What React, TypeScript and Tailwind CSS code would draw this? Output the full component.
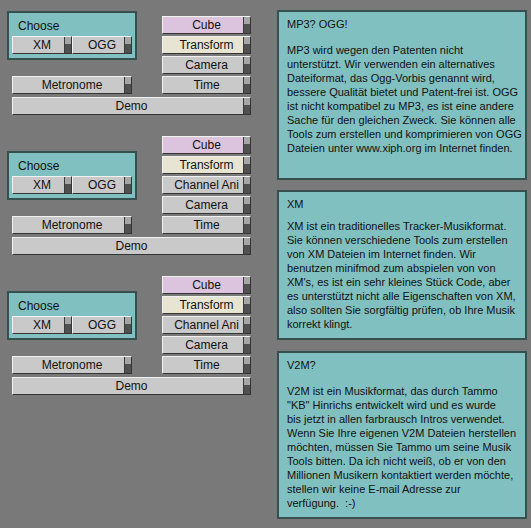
import type { ReactNode } from "react"

type Tone = "gray" | "pink" | "cream"

const tones: Record<Tone, string> = {
  gray: "bg-[#c9c9c9]",
  pink: "bg-[#dcc4de]",
  cream: "bg-[#e7e5d1]",
}

// Old-style menu button with the little indicator strip on the right
function Btn({ label, tone = "gray", className = "" }: { label: string; tone?: Tone; className?: string }) {
  return (
    <div
      className={`flex h-[18px] border border-t-[#f2f2f2] border-l-[#f2f2f2] border-b-[#343434] border-r-[#343434] ${tones[tone]} ${className}`}
    >
      <span className="flex-1 pl-[7px] text-center text-[12px] leading-[16px] text-[#111]">{label}</span>
      <span className="flex w-[7px] flex-col border-l border-[#3a3a3a]">
        <span className="h-[7px] bg-[#a6a6a6]" />
        <span className="flex-1 bg-[#505050]" />
      </span>
    </div>
  )
}

function ToolGroup({ withChannel, className = "" }: { withChannel?: boolean; className?: string }) {
  return (
    <div className={`flex flex-col ${className}`}>
      <div className="flex items-end gap-[25px]">
        <div className="flex w-[130px] flex-col">
          <div className="h-[49px] border-2 border-[#36504f] bg-[#81c0c0] px-[3px] pt-[6px]">
            <div className="pl-[6px] text-[12px] leading-[14px] text-[#111]">Choose</div>
            <div className="mt-[3px] flex">
              <Btn label="XM" className="w-[60px]" />
              <Btn label="OGG" className="w-[60px]" />
            </div>
          </div>
          <Btn label="Metronome" className="ml-[5px] mt-[16px] w-[120px]" />
        </div>
        <div className="flex w-[89px] flex-col gap-[2px]">
          <Btn label="Cube" tone="pink" />
          <Btn label="Transform" tone="cream" />
          {withChannel && <Btn label="Channel Ani" />}
          <Btn label="Camera" />
          <Btn label="Time" />
        </div>
      </div>
      <Btn label="Demo" className="ml-[5px] mt-[3px] w-[239px]" />
    </div>
  )
}

function InfoPanel({ title, gap, lines, className = "" }: { title: string; gap: string; lines: ReactNode[]; className?: string }) {
  return (
    <div className={`border-2 border-[#36504f] bg-[#81c0c0] pl-[8px] pt-[5px] text-[11px] leading-[14px] text-[#111] ${className}`}>
      <div className={gap}>{title}</div>
      {lines.map((l, i) => (
        <div key={i} className="whitespace-pre">
          {l}
        </div>
      ))}
    </div>
  )
}

export default function App() {
  return (
    <div
      className="flex h-[528px] w-[531px] bg-[#797979]"
      style={{ fontFamily: '"Liberation Sans", Arial, sans-serif' }}
    >
      <div className="w-[270px] pl-[7px] pt-[11px]">
        <ToolGroup />
        <ToolGroup withChannel className="mt-[21px]" />
        <ToolGroup withChannel className="mt-[21px]" />
      </div>

      <div className="ml-[7px] flex w-[250px] flex-col pt-[10px]">
        <InfoPanel
          className="h-[170px]"
          title="MP3? OGG!"
          gap="mb-[12px]"
          lines={[
            "MP3 wird wegen den Patenten nicht",
            "unterstützt. Wir verwenden ein alternatives",
            "Dateiformat, das Ogg-Vorbis genannt wird,",
            "bessere Qualität bietet und Patent-frei ist. OGG",
            "ist nicht kompatibel zu MP3, es ist eine andere",
            "Sache für den gleichen Zweck. Sie können alle",
            "Tools zum erstellen und komprimieren von OGG",
            "Dateien unter www.xiph.org im Internet finden.",
          ]}
        />
        <InfoPanel
          className="mt-[10px] h-[150px]"
          title="XM"
          gap="mb-[8px]"
          lines={[
            "XM ist ein traditionelles Tracker-Musikformat.",
            "Sie können verschiedene Tools zum erstellen",
            "von XM Dateien im Internet finden. Wir",
            "benutzen minifmod zum abspielen von von",
            "XM's, es ist ein sehr kleines Stück Code, aber",
            "es unterstützt nicht alle Eigenschaften von XM,",
            "also sollten Sie sorgfältig prüfen, ob Ihre Musik",
            "korrekt klingt.",
          ]}
        />
        <InfoPanel
          className="mt-[11px] h-[168px]"
          title="V2M?"
          gap="mb-[12px]"
          lines={[
            "V2M ist ein Musikformat, das durch Tammo",
            "\"KB\" Hinrichs entwickelt wird und es wurde",
            "bis jetzt in allen farbrausch Intros verwendet.",
            "Wenn Sie Ihre eigenen V2M Dateien herstellen",
            "möchten, müssen Sie Tammo um seine Musik",
            "Tools bitten. Da ich nicht weiß, ob er von den",
            "Millionen Musikern kontaktiert werden möchte,",
            "stellen wir keine E-mail Adresse zur",
            "verfügung.  :-)",
          ]}
        />
      </div>
    </div>
  )
}
